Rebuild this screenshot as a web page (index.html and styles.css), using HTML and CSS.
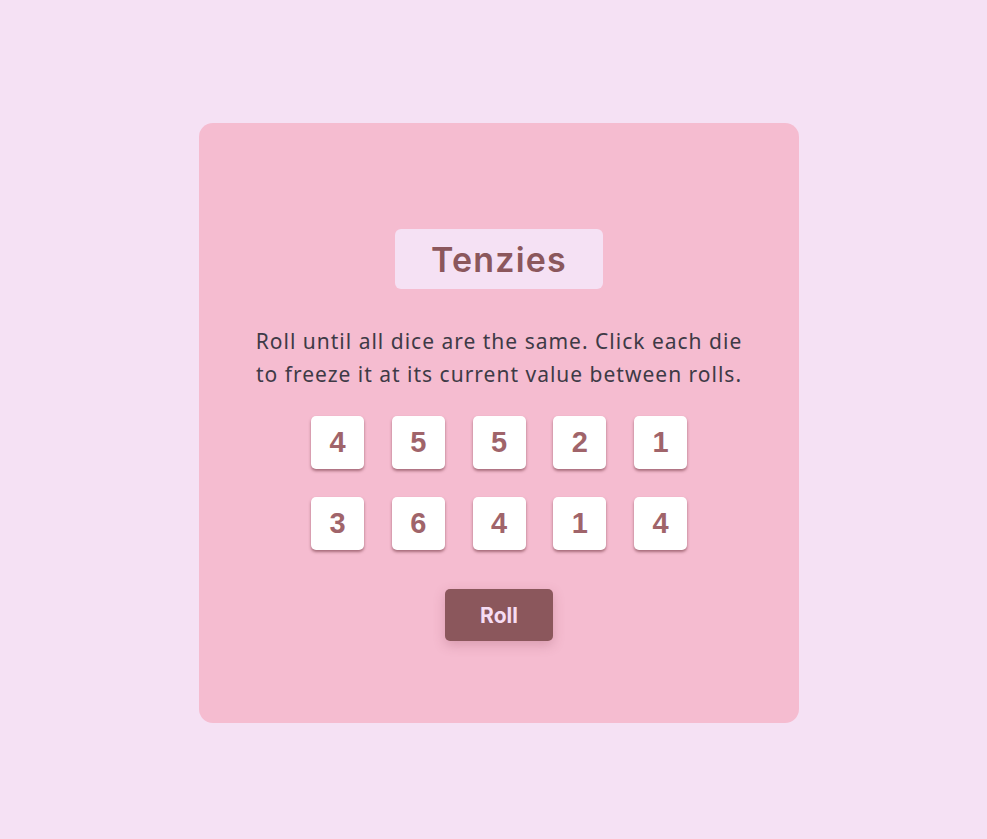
FILE: index.html
```html
<!DOCTYPE html>
<html lang="en">
<head>
<meta charset="utf-8">
<title>Tenzies</title>
<link rel="stylesheet" href="styles.css">
</head>
<body>
<div class="page">
  <main class="card">
    <h1 class="title">Tenzies</h1>
    <p class="instructions">Roll until all dice are the same. Click each die to freeze it at its current value between rolls.</p>
    <div class="dice">
      <button class="die">4</button>
      <button class="die">5</button>
      <button class="die">5</button>
      <button class="die">2</button>
      <button class="die">1</button>
      <button class="die">3</button>
      <button class="die">6</button>
      <button class="die">4</button>
      <button class="die">1</button>
      <button class="die">4</button>
    </div>
    <button class="roll">Roll</button>
  </main>
</div>
</body>
</html>
```
FILE: styles.css
```css
html, body {
  margin: 0;
  padding: 0;
  background: #f5e1f4;
}
body {
  font-family: "Noto Sans", "Open Sans", sans-serif;
}
.page {
  min-height: 100vh;
  box-sizing: border-box;
  padding: 7px 0 0 11px;
  display: flex;
  justify-content: center;
  align-items: center;
}
.card {
  width: 600px;
  height: 600px;
  box-sizing: border-box;
  background: #f5bcd0;
  border-radius: 14px;
  display: flex;
  flex-direction: column;
  align-items: center;
  padding-top: 106px;
}
.title {
  margin: 0;
  width: 208px;
  height: 60px;
  box-sizing: border-box;
  background: #f5e1f4;
  border-radius: 6px;
  color: #8b575c;
  font-family: "Inter", "Noto Sans", sans-serif;
  font-size: 34px;
  font-weight: 600;
  letter-spacing: 1.2px;
  display: flex;
  align-items: center;
  justify-content: center;
}
.instructions {
  margin: 36px 0 0;
  width: 500px;
  text-align: center;
  color: #3e3a46;
  font-size: 21px;
  letter-spacing: 1px;
  line-height: 33px;
}
.dice {
  margin-top: 25px;
  display: grid;
  grid-template-columns: repeat(5, 53px);
  column-gap: 27.75px;
  row-gap: 28px;
}
.die {
  width: 53px;
  height: 53px;
  border: none;
  border-radius: 5px;
  background: #ffffff;
  box-shadow: 0 2px 3px rgba(100, 40, 50, 0.55);
  color: #a0646a;
  font-family: "Liberation Sans", Arial, sans-serif;
  font-weight: 700;
  font-size: 29px;
  padding: 0;
  cursor: pointer;
}
.roll {
  margin-top: 39px;
  width: 108px;
  height: 52px;
  border: none;
  border-radius: 5px;
  background: #8b575c;
  color: #f6dcf3;
  font-family: "Inter", "Noto Sans", sans-serif;
  font-weight: 700;
  font-size: 21px;
  box-shadow: 0 4px 12px rgba(130, 60, 80, 0.25);
  cursor: pointer;
}
```
